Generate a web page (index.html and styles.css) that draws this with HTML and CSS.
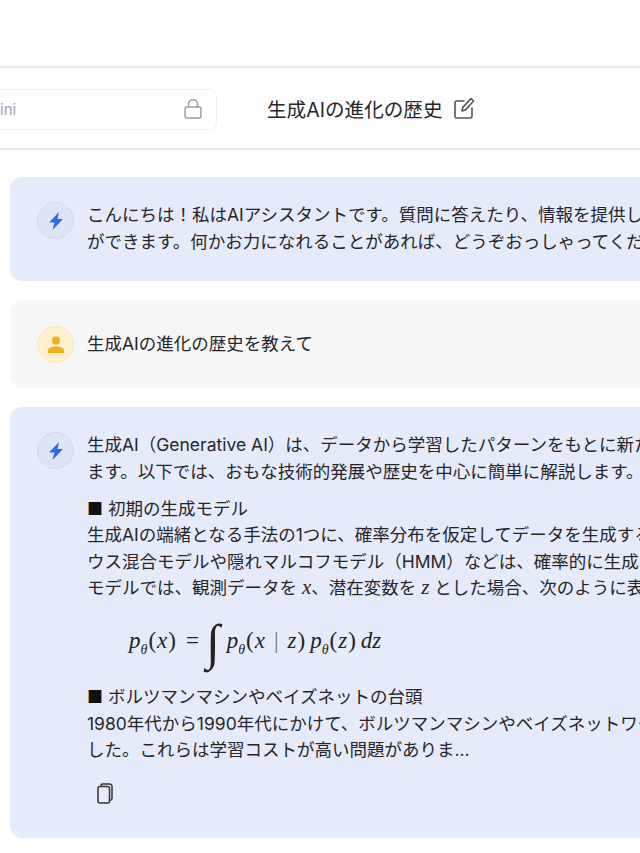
FILE: index.html
```html
<!DOCTYPE html>
<html lang="ja">
<head>
	<meta charset="UTF-8">
	<title>生成AIの進化の歴史</title>
	<link rel="stylesheet" href="styles.css">
</head>
<body>
	<div class="top"></div>
	<header class="bar">
		<div class="model">
			<span class="model-name">Gemini</span>
			<svg class="lock" viewBox="0 0 18 20" width="18" height="20" fill="none" stroke="#a0a0a0" stroke-width="1.5">
				<rect x="1" y="8" width="16" height="11" rx="2"/>
				<path d="M4.500 8V5a4.500 4.250 0 0 1 9 0v3"/>
			</svg>
		</div>
		<h1 class="title">生成AIの進化の歴史</h1>
		<svg class="edit" viewBox="0 0 21 22" width="21" height="22" fill="none" stroke="#555" stroke-width="1.6" stroke-linecap="round" stroke-linejoin="round">
			<path d="M10 4H3a2 2 0 0 0-2 2v13a2 2 0 0 0 2 2h13a2 2 0 0 0 2-2v-8"/>
			<path d="M8 14l.8-3.600L17 1.600l2.600 2.400-8.200 8.900z"/>
		</svg>
	</header>

	<main class="chat">
		<section class="card ai">
			<div class="avatar avatar-ai">
				<svg viewBox="0 0 14 18" width="14" height="18"><path fill="#2f6be6" d="M10 0L0 10.500h5.500L3.500 18 14 7H8.500z"/></svg>
			</div>
			<div class="body">
				<p>こんにちは！私はAIアシスタントです。質問に答えたり、情報を提供したりすること<br>ができます。何かお力になれることがあれば、どうぞおっしゃってください。</p>
			</div>
		</section>

		<section class="card user">
			<div class="avatar avatar-user">
				<svg viewBox="0 0 16 17" width="16" height="17" fill="#f2b01e">
					<circle cx="8" cy="4.500" r="4"/>
					<path d="M0 17v-2.500C0 12 4 10.500 8 10.500s8 1.500 8 4V17z"/>
				</svg>
			</div>
			<div class="body">
				<p>生成AIの進化の歴史を教えて</p>
			</div>
		</section>

		<section class="card ai">
			<div class="avatar avatar-ai">
				<svg viewBox="0 0 14 18" width="14" height="18"><path fill="#2f6be6" d="M10 0L0 10.500h5.500L3.500 18 14 7H8.500z"/></svg>
			</div>
			<div class="body">
				<p>生成AI（Generative AI）は、データから学習したパターンをもとに新たなデータを生成し<br>ます。以下では、おもな技術的発展や歴史を中心に簡単に解説します。</p>
				<p><span class="mark">■</span>初期の生成モデル<br>生成AIの端緒となる手法の1つに、確率分布を仮定してデータを生成するものがあり、ガ<br>ウス混合モデルや隠れマルコフモデル（HMM）などは、確率的に生成する手法です。<br>モデルでは、観測データを <i class="var">x</i>、潜在変数を <i class="var">z</i> とした場合、次のように表されます。</p>
				<div class="math">
					<i>p<sub>θ</sub></i><span class="par">(</span><i>x</i><span class="par">)</span><span class="eq">=</span><span class="int">∫</span><i>p<sub>θ</sub></i><span class="par">(</span><i>x</i><span class="mid">|</span><i>z</i><span class="par">)</span><i class="next">p<sub>θ</sub></i><span class="par">(</span><i>z</i><span class="par">)</span><i class="next">dz</i>
				</div>
				<p><span class="mark">■</span>ボルツマンマシンやベイズネットの台頭<br>1980年代から1990年代にかけて、ボルツマンマシンやベイズネットワークが提案されま<br>した。これらは学習コストが高い問題がありま...</p>
				<svg class="copy" viewBox="0 0 16 21" width="16" height="21" fill="none" stroke="#333" stroke-width="1.500" stroke-linejoin="round">
					<rect x="1" y="3.500" width="11.500" height="16.500" rx="2"/>
					<path d="M4 3.500V2.500A1.500 1.500 0 0 1 5.500 1h7A2.500 2.500 0 0 1 15 3.500v12a2 2 0 0 1-2.500 1.700"/>
				</svg>
			</div>
		</section>
	</main>
</body>
</html>
```

FILE: styles.css
```css
html, body{
	margin: 0;
	padding: 0;
	height: 853px;
	overflow: hidden;
	background: #fff;
}

body{
	font-family: "Inter", "Noto Sans CJK JP", sans-serif;
	color: #26262a;
}

.top{
	box-sizing: border-box;
	height: 68px;
	border-bottom: 2px solid #e8e8e8;
}

.bar{
	box-sizing: border-box;
	height: 82px;
	border-bottom: 2px solid #e6e6e6;
	display: flex;
	align-items: center;
	background: #fefefe;
}

.model{
	flex: none;
	box-sizing: border-box;
	width: 267px;
	height: 41px;
	margin-top: 2px;
	margin-left: -50px;
	padding: 0 14px 0 16px;
	display: flex;
	align-items: center;
	justify-content: space-between;
	border: 1px solid #f1f1f3;
	border-radius: 7px;
	background: #fff;
}

.model-name{
	font-size: 15px;
	color: #a3a3a8;
}

.title{
	margin: 0 0 0 50px;
	font-size: 19.600px;
	font-weight: 400;
	color: #26262a;
	white-space: nowrap;
}

.edit{
	flex: none;
	margin-left: 11px;
}

.chat{
	padding: 27px 0 0 10px;
	display: flex;
	flex-direction: column;
	gap: 19px;
}

.card{
	width: 760px;
	box-sizing: border-box;
	padding: 25px 27px 26px;
	border-radius: 12px;
	display: flex;
	gap: 13px;
}

.ai{
	background: #e6ebfb;
}

.user{
	background: #f7f7f8;
	align-items: center;
	padding-top: 26px;
	padding-bottom: 25px;
}

.avatar{
	flex: none;
	box-sizing: border-box;
	width: 37px;
	height: 37px;
	border-radius: 50%;
	display: flex;
	align-items: center;
	justify-content: center;
}

.avatar-ai{
	background: #dde5f8;
	border: 1px solid #cfd9f1;
}

.avatar-user{
	background: #fdf0cd;
	border: 1px solid #f8e8c0;
}

.body{
	flex: 1;
	min-width: 0;
	font-size: 17.500px;
	line-height: 26.500px;
	white-space: nowrap;
}

.body p{
	margin: 0 0 10.500px;
}

.body p:last-of-type{
	margin-bottom: 0;
}

.user .body p{
	margin: 0;
}

.mark{
	margin-right: 5px;
	color: #111;
}

.var{
	font-family: "Liberation Serif", serif;
	font-size: 21px;
	line-height: 0;
}

.math{
	box-sizing: border-box;
	height: 73px;
	margin-top: -10px;
	margin-bottom: 9px;
	padding-top: 6px;
	padding-left: 42px;
	display: flex;
	align-items: center;
	font-family: "Liberation Serif", serif;
	font-size: 23px;
	color: #222;
}

.math sub{
	font-size: 14px;
	line-height: 0;
}

.par{
	margin: 0 1px;
}

.eq{
	margin: 0 7px 0 9px;
}

.int{
	font-size: 50px;
	font-style: italic;
	line-height: 1;
	margin-right: 7px;
}

.mid{
	margin: 0 9px;
	color: #777;
}

.next{
	margin-left: 4px;
}

.copy{
	display: block;
	margin: 19px 0 8px 10px;
}
```
